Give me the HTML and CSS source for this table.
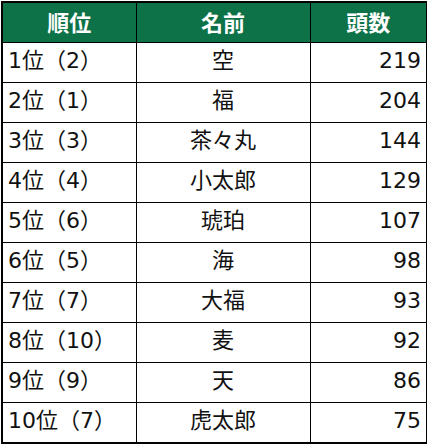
FILE: index.html
```html
<!DOCTYPE html>
<html lang="ja">
<head>
<meta charset="utf-8">
<link rel="stylesheet" href="styles.css">
</head>
<body>
<table class="ranking">
  <colgroup>
    <col class="c-rank">
    <col class="c-name">
    <col class="c-count">
  </colgroup>
  <thead>
    <tr><th>順位</th><th>名前</th><th>頭数</th></tr>
  </thead>
  <tbody>
    <tr><td class="rank">1位（2）</td><td class="name">空</td><td class="count">219</td></tr>
    <tr><td class="rank">2位（1）</td><td class="name">福</td><td class="count">204</td></tr>
    <tr><td class="rank">3位（3）</td><td class="name">茶々丸</td><td class="count">144</td></tr>
    <tr><td class="rank">4位（4）</td><td class="name">小太郎</td><td class="count">129</td></tr>
    <tr><td class="rank">5位（6）</td><td class="name">琥珀</td><td class="count">107</td></tr>
    <tr><td class="rank">6位（5）</td><td class="name">海</td><td class="count">98</td></tr>
    <tr><td class="rank">7位（7）</td><td class="name">大福</td><td class="count">93</td></tr>
    <tr><td class="rank">8位（10）</td><td class="name">麦</td><td class="count">92</td></tr>
    <tr><td class="rank">9位（9）</td><td class="name">天</td><td class="count">86</td></tr>
    <tr><td class="rank">10位（7）</td><td class="name">虎太郎</td><td class="count">75</td></tr>
  </tbody>
</table>
</body>
</html>
```

FILE: styles.css
```css
html, body {
  margin: 0;
  padding: 0;
  background: #ffffff;
}

body {
  font-family: "DejaVu Sans", "Noto Sans CJK JP", sans-serif;
  color: #111111;
}

.ranking {
  border-collapse: collapse;
  margin: 1px 0 0 1px;
  border: 2px solid #000000;
  table-layout: fixed;
  width: 425px;
}

.c-rank { width: 134px; }
.c-name { width: 174px; }
.c-count { width: 117px; }

.ranking th,
.ranking td {
  border: 1px solid #000000;
  height: 36px;
  padding: 0 5px 3px;
  font-size: 22px;
  line-height: 1;
  white-space: nowrap;
}

.ranking th {
  background: #0d7248;
  color: #ffffff;
  font-family: "Noto Sans CJK JP", sans-serif;
  font-weight: bold;
  text-align: center;
}

.ranking .rank { text-align: left; }
.ranking .name { text-align: center; }
.ranking .count { text-align: right; }
```
